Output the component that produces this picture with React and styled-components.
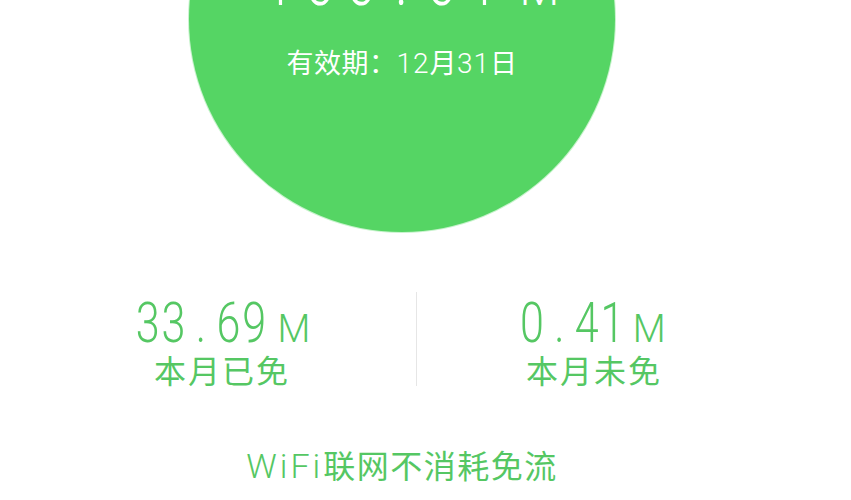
import React from 'react';
import styled, { createGlobalStyle } from 'styled-components';

const GlobalStyle = createGlobalStyle`
  html, body {
    margin: 0;
    padding: 0;
    background: #ffffff;
  }
  body {
    font-family: Roboto, "Noto Sans CJK SC", sans-serif;
  }
`;

const stats = [
  { id: 'used', whole: '33', frac: '69', label: '本月已免' },
  { id: 'left', whole: '0', frac: '41', label: '本月未免' },
];

const App = () => {
  return (
    <>
      <GlobalStyle />
      <Page>
        <Hero>
          <Circle>
            <BigValue>
              <BigDigits>
                100<BigDot>.</BigDot>01
              </BigDigits>
              <BigUnit>M</BigUnit>
            </BigValue>
            <Expiry>
              有效期：<ExpiryNum>12</ExpiryNum>月<ExpiryNum>31</ExpiryNum>日
            </Expiry>
          </Circle>
        </Hero>
        <StatsRow>
          {stats.map((s, i) => (
            <React.Fragment key={s.id}>
              {i > 0 && <Divider />}
              <Stat>
                <Value>
                  <Digits>
                    {s.whole}<Dot>.</Dot>{s.frac}
                  </Digits>
                  <Unit>M</Unit>
                </Value>
                <Label>{s.label}</Label>
              </Stat>
            </React.Fragment>
          ))}
        </StatsRow>
        <Footer>
          <FooterLatin>WiFi</FooterLatin>联网不消耗免流
        </Footer>
      </Page>
    </>
  );
};

export default App;

const green = '#55c763';

const Page = styled.div`
  width: 851px;
  height: 500px;
  overflow: hidden;
  background: #fff;
  display: flex;
  flex-direction: column;
`;

const Hero = styled.div`
  width: 804px;
  display: flex;
  justify-content: center;
`;

const Circle = styled.div`
  width: 426px;
  height: 426px;
  margin-top: -194px;
  border-radius: 50%;
  background: #55d564;
  box-shadow: 0 0 0 1px #c8f3cd;
  display: flex;
  flex-direction: column;
  align-items: center;
  padding-top: 140px;
  box-sizing: border-box;
  color: #fff;
`;

const BigValue = styled.div`
  display: flex;
  align-items: baseline;
  height: 70px;
  line-height: 70px;
  padding-left: 8px;
`;

const BigDigits = styled.span`
  display: inline-block;
  font-family: Roboto, sans-serif;
  font-weight: 300;
  font-size: 72px;
  letter-spacing: 15px;
  transform: scaleX(0.75);
  margin: 0 -30px 0 -30px;
`;

const BigDot = styled.span`
  margin: 0 10px;
`;

const BigUnit = styled.span`
  font-family: Roboto, sans-serif;
  font-weight: 300;
  font-size: 46px;
`;

const Expiry = styled.div`
  margin-top: 32px;
  font-family: "Noto Sans CJK SC", sans-serif;
  font-size: 27px;
  line-height: 27px;
  letter-spacing: 0.5px;
`;

const ExpiryNum = styled.span`
  font-family: Roboto, sans-serif;
  font-weight: 300;
  font-size: 28px;
  letter-spacing: 1px;
`;

const StatsRow = styled.div`
  display: grid;
  grid-template-columns: 380px 1px 346px;
  column-gap: 4px;
  padding-left: 32px;
  margin-top: 60px;
`;

const Stat = styled.div`
  display: flex;
  flex-direction: column;
  align-items: center;
  padding-top: 6px;
  color: ${green};
`;

const Value = styled.div`
  display: flex;
  align-items: baseline;
  height: 50px;
  line-height: 50px;
`;

const Digits = styled.span`
  display: inline-block;
  font-family: Roboto, sans-serif;
  font-weight: 300;
  font-size: 56px;
  letter-spacing: 2.4px;
  transform: scaleX(0.77);
  margin: 0 -10px 0 -18px;
`;

const Dot = styled.span`
  margin: 0 11px;
`;

const Unit = styled.span`
  font-family: Roboto, sans-serif;
  font-weight: 300;
  font-size: 38px;
`;

const Label = styled.div`
  margin-top: 4px;
  font-family: "Noto Sans CJK SC", sans-serif;
  font-size: 32px;
  line-height: 34px;
  letter-spacing: 2px;
`;

const Divider = styled.div`
  background: #e6e6e6;
`;

const Footer = styled.div`
  width: 804px;
  margin-top: 61px;
  text-align: center;
  color: ${green};
  font-family: "Noto Sans CJK SC", sans-serif;
  font-size: 32px;
  line-height: 34px;
  letter-spacing: 1.5px;
`;

const FooterLatin = styled.span`
  font-family: Roboto, sans-serif;
  font-weight: 300;
  font-size: 34px;
  letter-spacing: 3px;
`;
